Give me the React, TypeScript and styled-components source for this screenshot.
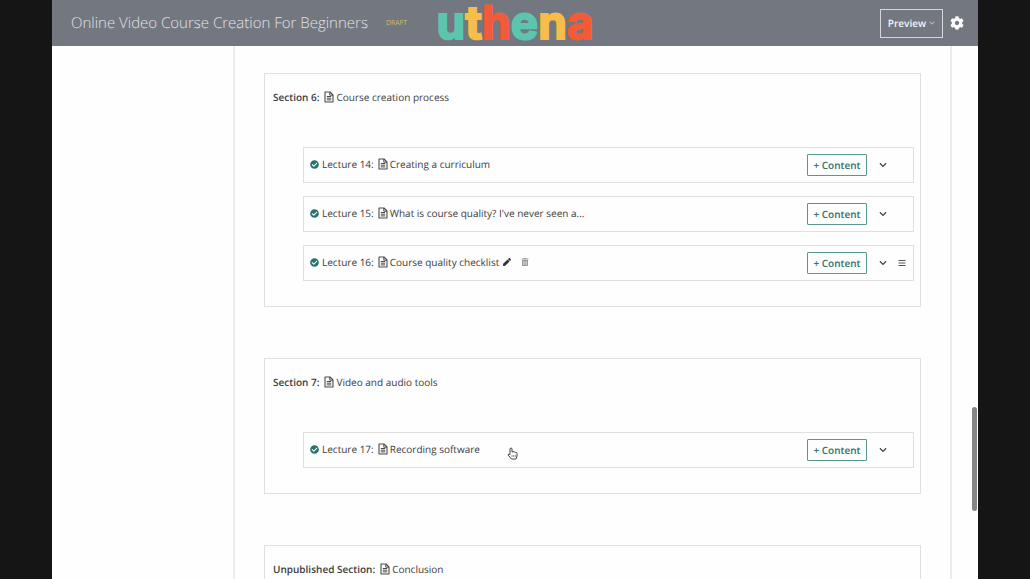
import React from "react";
import styled, { createGlobalStyle } from "styled-components";
import { FaCheckCircle, FaChevronDown, FaCog, FaPen, FaTrashAlt, FaBars } from "react-icons/fa";

const GlobalStyle = createGlobalStyle`
  * { box-sizing: border-box; }
  body {
    margin: 0;
    background: #151515;
    color: #3c3c3c;
    font: 10px/16px "Open Sans", "Noto Sans", sans-serif;
    text-rendering: geometricPrecision;
  }
  h1, h2, ul { margin: 0; padding: 0; font: inherit; }
  ul { list-style: none; }
  button { font: inherit; cursor: pointer; text-rendering: inherit; }
`;

const Page = styled.div`
  position: relative;
  display: flex;
  flex-direction: column;
  height: 100vh;
  margin: 0 52px;
  overflow: hidden;
  background: #fefefe;
`;

const Header = styled.header`
  position: relative;
  flex: none;
  display: flex;
  align-items: center;
  height: 46px;
  padding: 0 14px 0 19px;
  background: #737780;
  color: #fff;
`;

const CourseTitle = styled.h1`
  color: #e2e3e5;
  font-size: 15px;
  font-weight: 300;
  line-height: 24px;
`;

const Draft = styled.span`
  margin: 2px auto 0 18px;
  color: #d8bd62;
  font-size: 7px;
`;

const Logo = styled.div`
  position: absolute;
  left: 50%;
  top: 0;
  transform: translateX(-50%);
  font: 700 46px/46px Inter, sans-serif;
`;

const Letter = styled.span<{ $color: string }>`
  color: ${(p) => p.$color};
  -webkit-text-stroke: 2px ${(p) => p.$color};
  stroke-linejoin: round;
`;

const PreviewButton = styled.button`
  display: flex;
  align-items: center;
  justify-content: center;
  gap: 3px;
  width: 63px;
  height: 29px;
  padding: 0;
  border: 1px solid #d5d6d9;
  background: none;
  color: #f4f4f5;
  font-weight: 600;
`;

const IconButton = styled.button<{ $color?: string }>`
  display: flex;
  padding: 0;
  border: 0;
  background: none;
  color: ${(p) => p.$color ?? "#444"};
`;

const SettingsButton = styled(IconButton)`
  margin-left: 7px;
`;

const Body = styled.div`
  flex: 1;
  display: flex;
  min-height: 0;
`;

const Sidebar = styled.aside`
  flex: none;
  width: 181px;
`;

const Curriculum = styled.main`
  flex: 1;
  display: flex;
  flex-direction: column;
  gap: 51px;
  margin-right: 26px;
  padding: 27px 29px 0 29px;
  border: solid #ececec;
  border-width: 0 2px;
`;

const SectionBox = styled.section`
  flex: none;
  padding: 15px 6px 25px 8px;
  border: 1px solid #e0e0e0;
`;

const SectionHeading = styled.h2`
  display: flex;
  align-items: center;
  height: 16px;
`;

const SectionLabel = styled.span`
  font-weight: 600;
  margin-right: 5px;
`;

const LectureList = styled.ul`
  display: grid;
  gap: 13px;
  margin: 42px 0 0 30px;
`;

const LectureRow = styled.li`
  display: flex;
  align-items: center;
  height: 36px;
  padding: 0 7px 0 6px;
  border: 1px solid #e0e0e0;
`;

const LectureTitle = styled.div`
  display: flex;
  align-items: center;
  padding-bottom: 2px;
`;

const LectureLabel = styled.span`
  margin: 0 4px 0 3px;
`;

const Name = styled.span`
  margin-left: 2px;
`;

const EditTools = styled.div`
  display: flex;
  align-items: center;
  gap: 10px;
  margin-left: 4px;
`;

const Actions = styled.div`
  display: flex;
  align-items: center;
  margin-left: auto;
`;

const ContentButton = styled.button`
  width: 60px;
  height: 22px;
  margin-right: 12px;
  padding: 0;
  border: 1px solid #5d9590;
  border-radius: 1px;
  background: #fcfefe;
  color: #3a6f6c;
  font-weight: 600;
`;

const HandleSlot = styled.div`
  display: flex;
  justify-content: flex-end;
  width: 19px;
`;

const ScrollThumb = styled.div`
  position: absolute;
  right: 1px;
  top: 407px;
  width: 5px;
  height: 104px;
  border-radius: 3px;
  background: #858585;
`;

const Pointer = styled.svg`
  position: absolute;
  left: 455px;
  top: 447px;
`;

const FileIcon = () => (
  <svg width="10" height="12" viewBox="0 0 10 12" fill="none" stroke="#4a4a4a" aria-hidden="true">
    <path d="M1 1h5l3 3v7H1z" strokeWidth="1.1" strokeLinejoin="round" />
    <path d="M5.8 1v3.2H9M2.8 5.5h4.4M2.8 7.200h4.400M2.800 8.900h4.400" strokeWidth="1" />
  </svg>
);

type Lecture = { id: number; name: string; active?: boolean };
type Section = { label: string; name: string; lectures: Lecture[] };

const sections: Section[] = [
  {
    label: "Section 6:",
    name: "Course creation process",
    lectures: [
      { id: 14, name: "Creating a curriculum" },
      { id: 15, name: "What is course quality? I've never seen a..." },
      { id: 16, name: "Course quality checklist", active: true },
    ],
  },
  { label: "Section 7:", name: "Video and audio tools", lectures: [{ id: 17, name: "Recording software" }] },
  { label: "Unpublished Section:", name: "Conclusion", lectures: [] },
];

const logoLetters: [string, string][] = [
  ["u", "#5bc5ae"],
  ["t", "#f6bd4a"],
  ["h", "#f15b38"],
  ["e", "#5bc5ae"],
  ["n", "#f6bd4a"],
  ["a", "#f15b38"],
];

const LectureItem = ({ id, name, active }: Lecture) => (
  <LectureRow>
    <LectureTitle>
      <FaCheckCircle size={9} color="#28726f" />
      <LectureLabel>Lecture {id}:</LectureLabel>
      <FileIcon />
      <Name>{name}</Name>
      {active && (
        <EditTools>
          <IconButton aria-label="Edit title" $color="#333"><FaPen size={8} /></IconButton>
          <IconButton aria-label="Delete lecture" $color="#999"><FaTrashAlt size={8} /></IconButton>
        </EditTools>
      )}
    </LectureTitle>
    <Actions>
      <ContentButton>+ Content</ContentButton>
      <IconButton aria-label="Expand lecture"><FaChevronDown size={8} /></IconButton>
      <HandleSlot>
        {active && <IconButton aria-label="Reorder lecture" $color="#555"><FaBars size={8} /></IconButton>}
      </HandleSlot>
    </Actions>
  </LectureRow>
);

export default function App() {
  return (
    <Page>
      <GlobalStyle />
      <Header>
        <CourseTitle>Online Video Course Creation For Beginners</CourseTitle>
        <Draft>DRAFT</Draft>
        <Logo>
          {logoLetters.map(([char, color]) => (
            <Letter key={char} $color={color}>{char}</Letter>
          ))}
        </Logo>
        <PreviewButton>
          Preview
          <FaChevronDown size={6} color="#b5b7bb" />
        </PreviewButton>
        <SettingsButton aria-label="Settings" $color="#fff"><FaCog size={14} /></SettingsButton>
      </Header>
      <Body>
        <Sidebar />
        <Curriculum>
          {sections.map((section) => (
            <SectionBox key={section.label}>
              <SectionHeading>
                <SectionLabel>{section.label}</SectionLabel>
                <FileIcon />
                <Name>{section.name}</Name>
              </SectionHeading>
              <LectureList>
                {section.lectures.map((lecture) => (
                  <LectureItem key={lecture.id} {...lecture} />
                ))}
              </LectureList>
            </SectionBox>
          ))}
        </Curriculum>
      </Body>
      <ScrollThumb />
      <Pointer width="11" height="13" viewBox="0 0 11 13" fill="#fff" stroke="#444" strokeWidth="1" strokeLinejoin="round" aria-hidden="true">
        <path d="M3 7V2Q3 1 4 1T5 2V5Q6 4 7 5Q8 4.500 8.500 5.500Q10 5 10 6.500V9L9 12H4.500L1 8Q1 6.500 3 7.500Z" />
        <path d="M5 8v2M6.700 8v2M8.300 8v2" strokeWidth=".6" />
      </Pointer>
    </Page>
  );
}
